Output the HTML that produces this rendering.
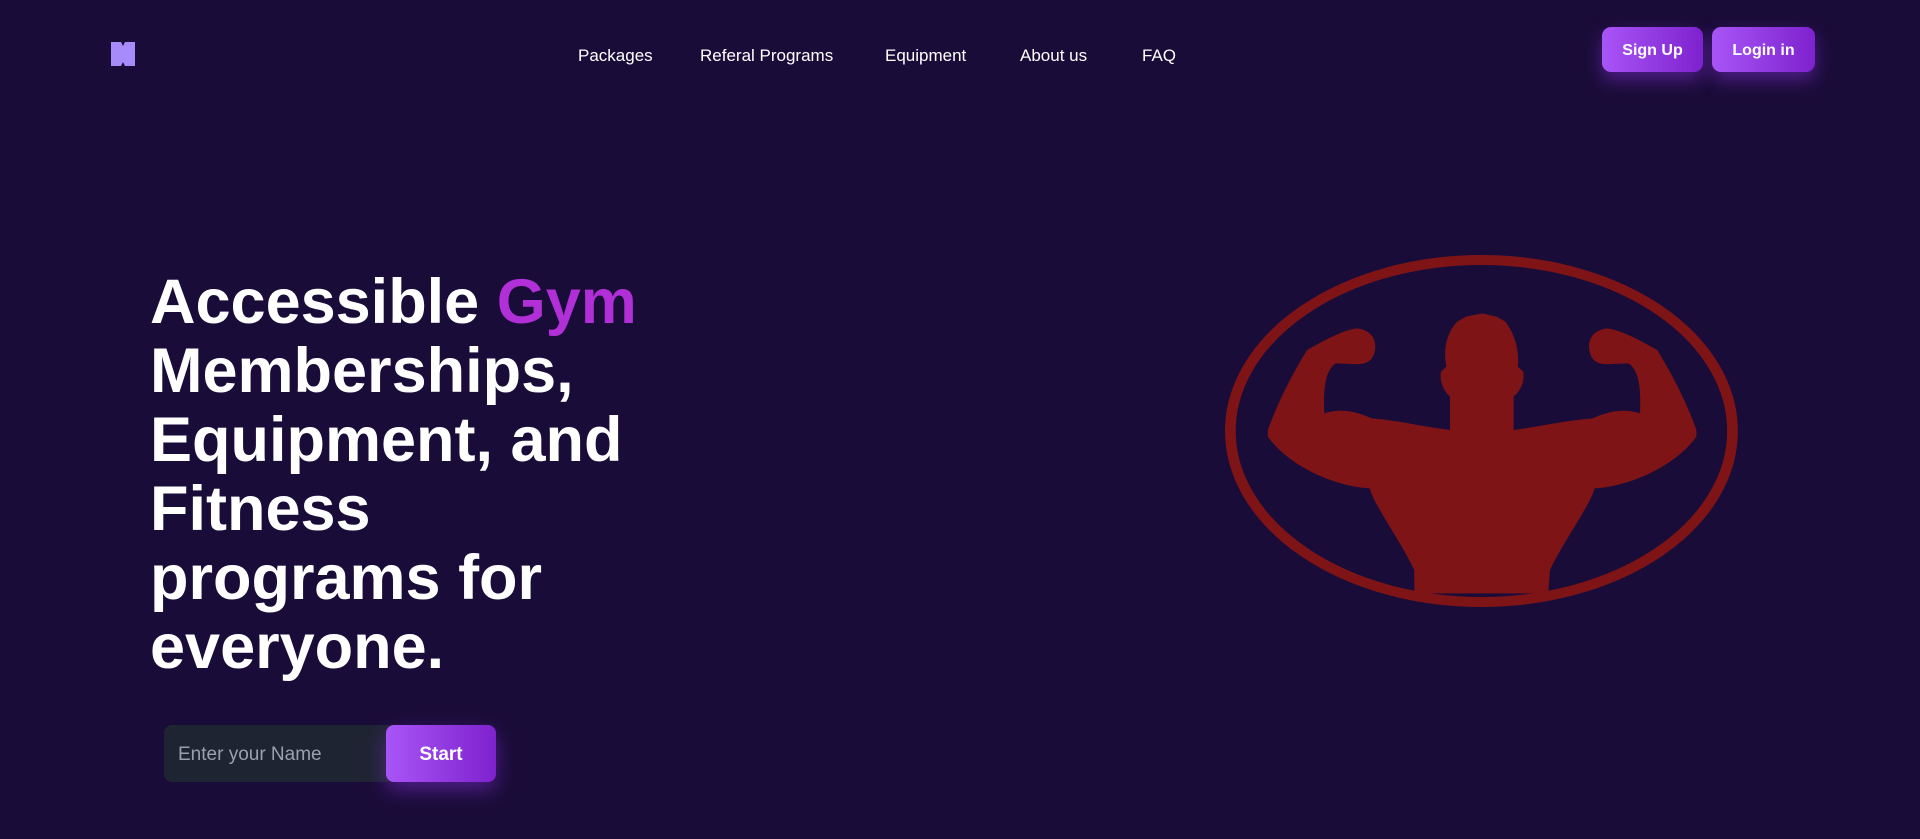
<!DOCTYPE html>
<html><head><meta charset="utf-8"><style>
*{margin:0;padding:0;box-sizing:border-box}
body{width:1920px;height:839px;overflow:hidden;background:#1a0c38;font-family:"Liberation Sans",sans-serif;position:relative;color:#fff}
.nav a{position:absolute;top:46px;font-size:17px;color:#fff;text-decoration:none;white-space:nowrap}
.btn{position:absolute;top:27px;height:45px;border-radius:9px;background:linear-gradient(90deg,#a855f7,#7e22ce);color:#fff;font-weight:bold;font-size:16px;display:flex;align-items:center;justify-content:center;padding-top:2px;box-shadow:0 8px 18px rgba(147,51,234,.45)}
h1{position:absolute;left:150px;top:268px;font-size:63px;line-height:69px;font-weight:bold;letter-spacing:0}
h1 span{color:#b02fd6}
.inp{position:absolute;left:164px;top:725px;width:230px;height:57px;background:#1f2433;border-radius:8px 0 0 8px;color:#9aa0ad;font-size:19px;padding:0 0 0 14px;line-height:59px}
.start{position:absolute;left:386px;top:725px;width:110px;height:57px;border-radius:8px;background:linear-gradient(90deg,#a855f7,#7e22ce);font-weight:bold;font-size:19px;display:flex;align-items:center;justify-content:center;padding-top:3px;box-shadow:0 8px 20px rgba(147,51,234,.45)}
</style></head><body>
<svg style="position:absolute;left:111px;top:42px" width="24" height="24" viewBox="0 0 24 24"><path d="M0 0H10L12 4L14 0H24V24H14L12 20L10 24H0Z" fill="#a78bfa"/></svg>
<div class="nav">
<a style="left:578px">Packages</a>
<a style="left:700px">Referal Programs</a>
<a style="left:885px">Equipment</a>
<a style="left:1020px">About us</a>
<a style="left:1142px">FAQ</a>
</div>
<div class="btn" style="left:1602px;width:101px">Sign Up</div>
<div class="btn" style="left:1712px;width:103px">Login in</div>
<h1>Accessible <span>Gym</span><br>Memberships,<br>Equipment, and<br>Fitness<br>programs for<br>everyone.</h1>
<div class="inp">Enter your Name</div>
<div class="start">Start</div>
<svg style="position:absolute;left:1200px;top:240px" width="560" height="380" viewBox="0 0 1568 1140" preserveAspectRatio="none">
<ellipse cx="788" cy="573" rx="703" ry="513" fill="none" stroke="#7f1416" stroke-width="30"/>
<path fill="#7f1416" d="M600 1060 L600 990 C560 900 490 800 475 745 C380 740 250 680 190 590 L190 570 C220 480 260 400 300 330 C350 300 400 270 440 265 C480 270 495 300 490 330 C485 360 470 375 430 372 L380 370 C350 390 345 450 348 520 C380 510 420 505 480 535 C550 540 620 560 700 570 L700 470 C680 450 670 420 675 395 L690 380 C680 330 690 280 720 245 L745 230 L790 220 L830 230 L855 245 C880 280 895 330 890 380 L905 395 C910 420 900 450 878 470 L878 570 C950 560 1030 540 1100 535 C1160 505 1200 510 1232 520 C1235 450 1230 390 1200 370 L1150 372 C1110 375 1095 360 1090 330 C1085 300 1100 270 1140 265 C1180 270 1230 300 1280 330 C1320 400 1360 480 1390 570 L1390 590 C1330 680 1200 740 1105 745 C1090 800 1020 900 980 990 L975 1060 Z"/>
</svg>
</body></html>
